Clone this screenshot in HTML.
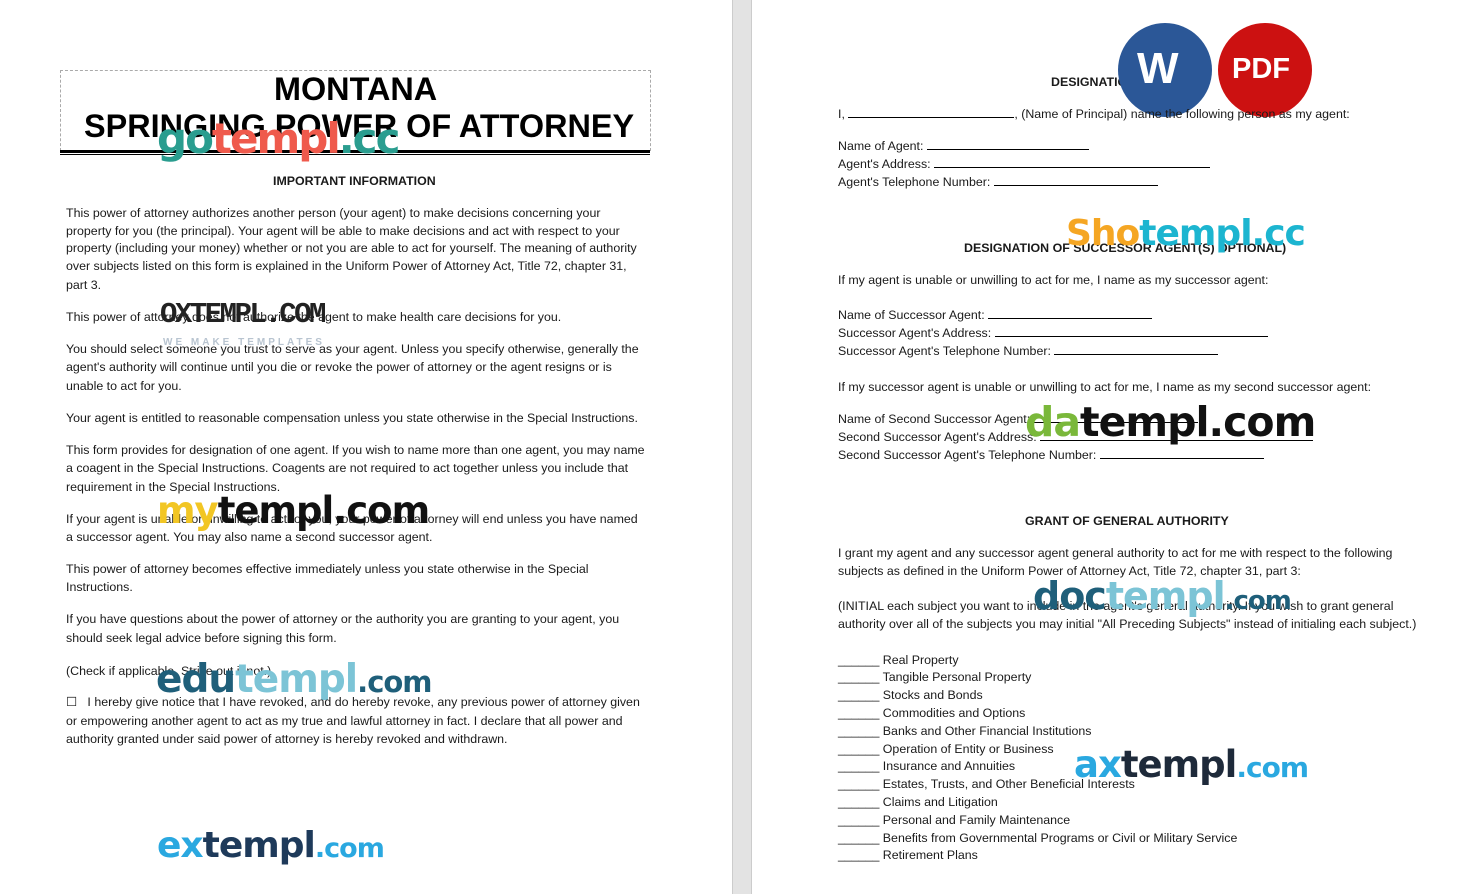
<!DOCTYPE html>
<html><head><meta charset="utf-8"><style>
*{margin:0;padding:0}
body{width:1469px;height:894px;position:relative;background:#fff;font-family:"Liberation Sans",Arial,sans-serif;color:#1a1a1a;overflow:hidden}
.t{position:absolute;font-size:12.4px;white-space:nowrap;line-height:14px}
.b{font-weight:bold}
.h{position:absolute;font-weight:bold;font-size:32.4px;white-space:nowrap;color:#000}
.wm{position:absolute;font-weight:bold;white-space:nowrap;line-height:1}
.u{display:inline-block;border-bottom:1px solid #000;height:10px;vertical-align:baseline}
</style></head><body>
<div style="position:absolute;left:732px;top:0;width:18px;height:894px;background:#e3e3e3;border-left:1px solid #ccc;border-right:1px solid #ccc"></div>
<div style="position:absolute;left:60px;top:70px;width:589px;height:80px;border:1px dashed #aaa;border-bottom:none"></div>
<div style="position:absolute;left:60px;top:150px;width:590px;height:3px;background:#000"></div>
<div style="position:absolute;left:60px;top:154px;width:590px;height:1px;background:#000"></div>
<div class="h" style="left:274px;top:71px">MONTANA</div>
<div class="h" style="left:84px;top:108px">SPRINGING POWER OF ATTORNEY</div>
<div class="wm" style="left:157px;top:118px;font-size:42px;font-family:'DejaVu Sans',sans-serif;letter-spacing:-2px"><span style="color:#2a9d8f">go</span><span style="color:#ef5a4c">templ</span><span style="color:#2a9d8f">.cc</span></div>
<div class="t b" style="left:273px;top:174px">IMPORTANT INFORMATION</div>
<div class="t" style="left:66px;top:206px">This power of attorney authorizes another person (your agent) to make decisions concerning your</div>
<div class="t" style="left:66px;top:224px">property for you (the principal). Your agent will be able to make decisions and act with respect to your</div>
<div class="t" style="left:66px;top:241px">property (including your money) whether or not you are able to act for yourself. The meaning of authority</div>
<div class="t" style="left:66px;top:259px">over subjects listed on this form is explained in the Uniform Power of Attorney Act, Title 72, chapter 31,</div>
<div class="t" style="left:66px;top:278px">part 3.</div>
<div class="t" style="left:66px;top:310px">This power of attorney does not authorize the agent to make health care decisions for you.</div>
<div class="wm" style="left:160px;top:300px;font-size:29px;color:#222;font-family:'Liberation Mono',monospace;letter-spacing:-2.5px">OXTEMPL.COM</div>
<div class="wm" style="left:163px;top:338px;font-size:10px;color:#b8c4d0;letter-spacing:3px">WE MAKE TEMPLATES</div>
<div class="t" style="left:66px;top:342px">You should select someone you trust to serve as your agent. Unless you specify otherwise, generally the</div>
<div class="t" style="left:66px;top:360px">agent's authority will continue until you die or revoke the power of attorney or the agent resigns or is</div>
<div class="t" style="left:66px;top:379px">unable to act for you.</div>
<div class="t" style="left:66px;top:411px">Your agent is entitled to reasonable compensation unless you state otherwise in the Special Instructions.</div>
<div class="t" style="left:66px;top:443px">This form provides for designation of one agent. If you wish to name more than one agent, you may name</div>
<div class="t" style="left:66px;top:461px">a coagent in the Special Instructions. Coagents are not required to act together unless you include that</div>
<div class="t" style="left:66px;top:480px">requirement in the Special Instructions.</div>
<div class="t" style="left:66px;top:512px">If your agent is unable or unwilling to act for you, your power of attorney will end unless you have named</div>
<div class="t" style="left:66px;top:530px">a successor agent. You may also name a second successor agent.</div>
<div class="wm" style="left:157px;top:492px;font-size:37px;font-family:'DejaVu Sans',sans-serif;letter-spacing:-1px"><span style="color:#f2c624">my</span><span style="color:#111">templ.com</span></div>
<div class="t" style="left:66px;top:562px">This power of attorney becomes effective immediately unless you state otherwise in the Special</div>
<div class="t" style="left:66px;top:580px">Instructions.</div>
<div class="t" style="left:66px;top:612px">If you have questions about the power of attorney or the authority you are granting to your agent, you</div>
<div class="t" style="left:66px;top:631px">should seek legal advice before signing this form.</div>
<div class="t" style="left:66px;top:664px">(Check if applicable. Strike out if not.)</div>
<div class="wm" style="left:156px;top:660px;font-size:39px;font-family:'DejaVu Sans',sans-serif;letter-spacing:-1px"><span style="color:#1f5f7a">edu</span><span style="color:#7cc4d6">templ</span><span style="color:#1f5f7a;font-size:29px">.com</span></div>
<div class="t" style="left:66px;top:695px">☐&nbsp;&nbsp; I hereby give notice that I have revoked, and do hereby revoke, any previous power of attorney given</div>
<div class="t" style="left:66px;top:714px">or empowering another agent to act as my true and lawful attorney in fact. I declare that all power and</div>
<div class="t" style="left:66px;top:732px">authority granted under said power of attorney is hereby revoked and withdrawn.</div>
<div class="wm" style="left:157px;top:828px;font-size:36px;font-family:'DejaVu Sans',sans-serif;letter-spacing:-1px"><span style="color:#2aa8e0">ex</span><span style="color:#1e3a5a">templ</span><span style="color:#2aa8e0;font-size:27px">.com</span></div>

<div class="t b" style="left:1051px;top:75px">DESIGNATION OF AGENT</div>
<div style="position:absolute;left:1118px;top:23px;width:94px;height:94px;border-radius:50%;background:#2b5797"></div>
<div class="wm" style="left:1137px;top:47px;font-size:44px;color:#fff">W</div>
<div style="position:absolute;left:1218px;top:23px;width:94px;height:94px;border-radius:50%;background:#cc1111"></div>
<div class="wm" style="left:1232px;top:55px;font-size:29px;color:#fff">PDF</div>
<div class="t" style="left:838px;top:107px">I, <span class="u" style="width:166px"></span>, (Name of Principal) name the following person as my agent:</div>
<div class="t" style="left:838px;top:139px">Name of Agent: <span class="u" style="width:162px"></span></div>
<div class="t" style="left:838px;top:157px">Agent's Address: <span class="u" style="width:276px"></span></div>
<div class="t" style="left:838px;top:175px">Agent's Telephone Number: <span class="u" style="width:164px"></span></div>
<div class="t b" style="left:964px;top:241px">DESIGNATION OF SUCCESSOR AGENT(S) OPTIONAL)</div>
<div class="wm" style="left:1066px;top:216px;font-size:36px;font-family:'DejaVu Sans',sans-serif;letter-spacing:-1px"><span style="color:#f5a623">Sho</span><span style="color:#1cb5d0">templ.cc</span></div>
<div class="t" style="left:838px;top:273px">If my agent is unable or unwilling to act for me, I name as my successor agent:</div>
<div class="t" style="left:838px;top:308px">Name of Successor Agent: <span class="u" style="width:164px"></span></div>
<div class="t" style="left:838px;top:326px">Successor Agent's Address: <span class="u" style="width:273px"></span></div>
<div class="t" style="left:838px;top:344px">Successor Agent's Telephone Number: <span class="u" style="width:164px"></span></div>
<div class="t" style="left:838px;top:380px">If my successor agent is unable or unwilling to act for me, I name as my second successor agent:</div>
<div class="t" style="left:838px;top:412px">Name of Second Successor Agent: <span class="u" style="width:164px"></span></div>
<div class="t" style="left:838px;top:430px">Second Successor Agent's Address: <span class="u" style="width:273px"></span></div>
<div class="t" style="left:838px;top:448px">Second Successor Agent's Telephone Number: <span class="u" style="width:164px"></span></div>
<div class="wm" style="left:1025px;top:402px;font-size:41px;font-family:'DejaVu Sans',sans-serif;letter-spacing:-1px"><span style="color:#7ab83a">da</span><span style="color:#111">templ.com</span></div>
<div class="t b" style="left:1025px;top:514px">GRANT OF GENERAL AUTHORITY</div>
<div class="t" style="left:838px;top:546px">I grant my agent and any successor agent general authority to act for me with respect to the following</div>
<div class="t" style="left:838px;top:564px">subjects as defined in the Uniform Power of Attorney Act, Title 72, chapter 31, part 3:</div>
<div class="t" style="left:838px;top:599px">(INITIAL each subject you want to include in the agent's general authority. If you wish to grant general</div>
<div class="t" style="left:838px;top:617px">authority over all of the subjects you may initial "All Preceding Subjects" instead of initialing each subject.)</div>
<div class="wm" style="left:1033px;top:577px;font-size:38px;font-family:'DejaVu Sans',sans-serif;letter-spacing:-1px"><span style="color:#1f5f7a">doc</span><span style="color:#7cc4d6">templ</span><span style="color:#1f5f7a;font-size:26px">.com</span></div>
<div class="t" style="left:838px;top:653px">______ Real Property</div>
<div class="t" style="left:838px;top:670px">______ Tangible Personal Property</div>
<div class="t" style="left:838px;top:688px">______ Stocks and Bonds</div>
<div class="t" style="left:838px;top:706px">______ Commodities and Options</div>
<div class="t" style="left:838px;top:724px">______ Banks and Other Financial Institutions</div>
<div class="t" style="left:838px;top:742px">______ Operation of Entity or Business</div>
<div class="t" style="left:838px;top:759px">______ Insurance and Annuities</div>
<div class="t" style="left:838px;top:777px">______ Estates, Trusts, and Other Beneficial Interests</div>
<div class="t" style="left:838px;top:795px">______ Claims and Litigation</div>
<div class="t" style="left:838px;top:813px">______ Personal and Family Maintenance</div>
<div class="t" style="left:838px;top:831px">______ Benefits from Governmental Programs or Civil or Military Service</div>
<div class="t" style="left:838px;top:848px">______ Retirement Plans</div>
<div class="wm" style="left:1074px;top:746px;font-size:37px;font-family:'DejaVu Sans',sans-serif;letter-spacing:-1px"><span style="color:#2aa8e0">ax</span><span style="color:#1e2a3a">templ</span><span style="color:#2aa8e0;font-size:28px">.com</span></div>
</body></html>
